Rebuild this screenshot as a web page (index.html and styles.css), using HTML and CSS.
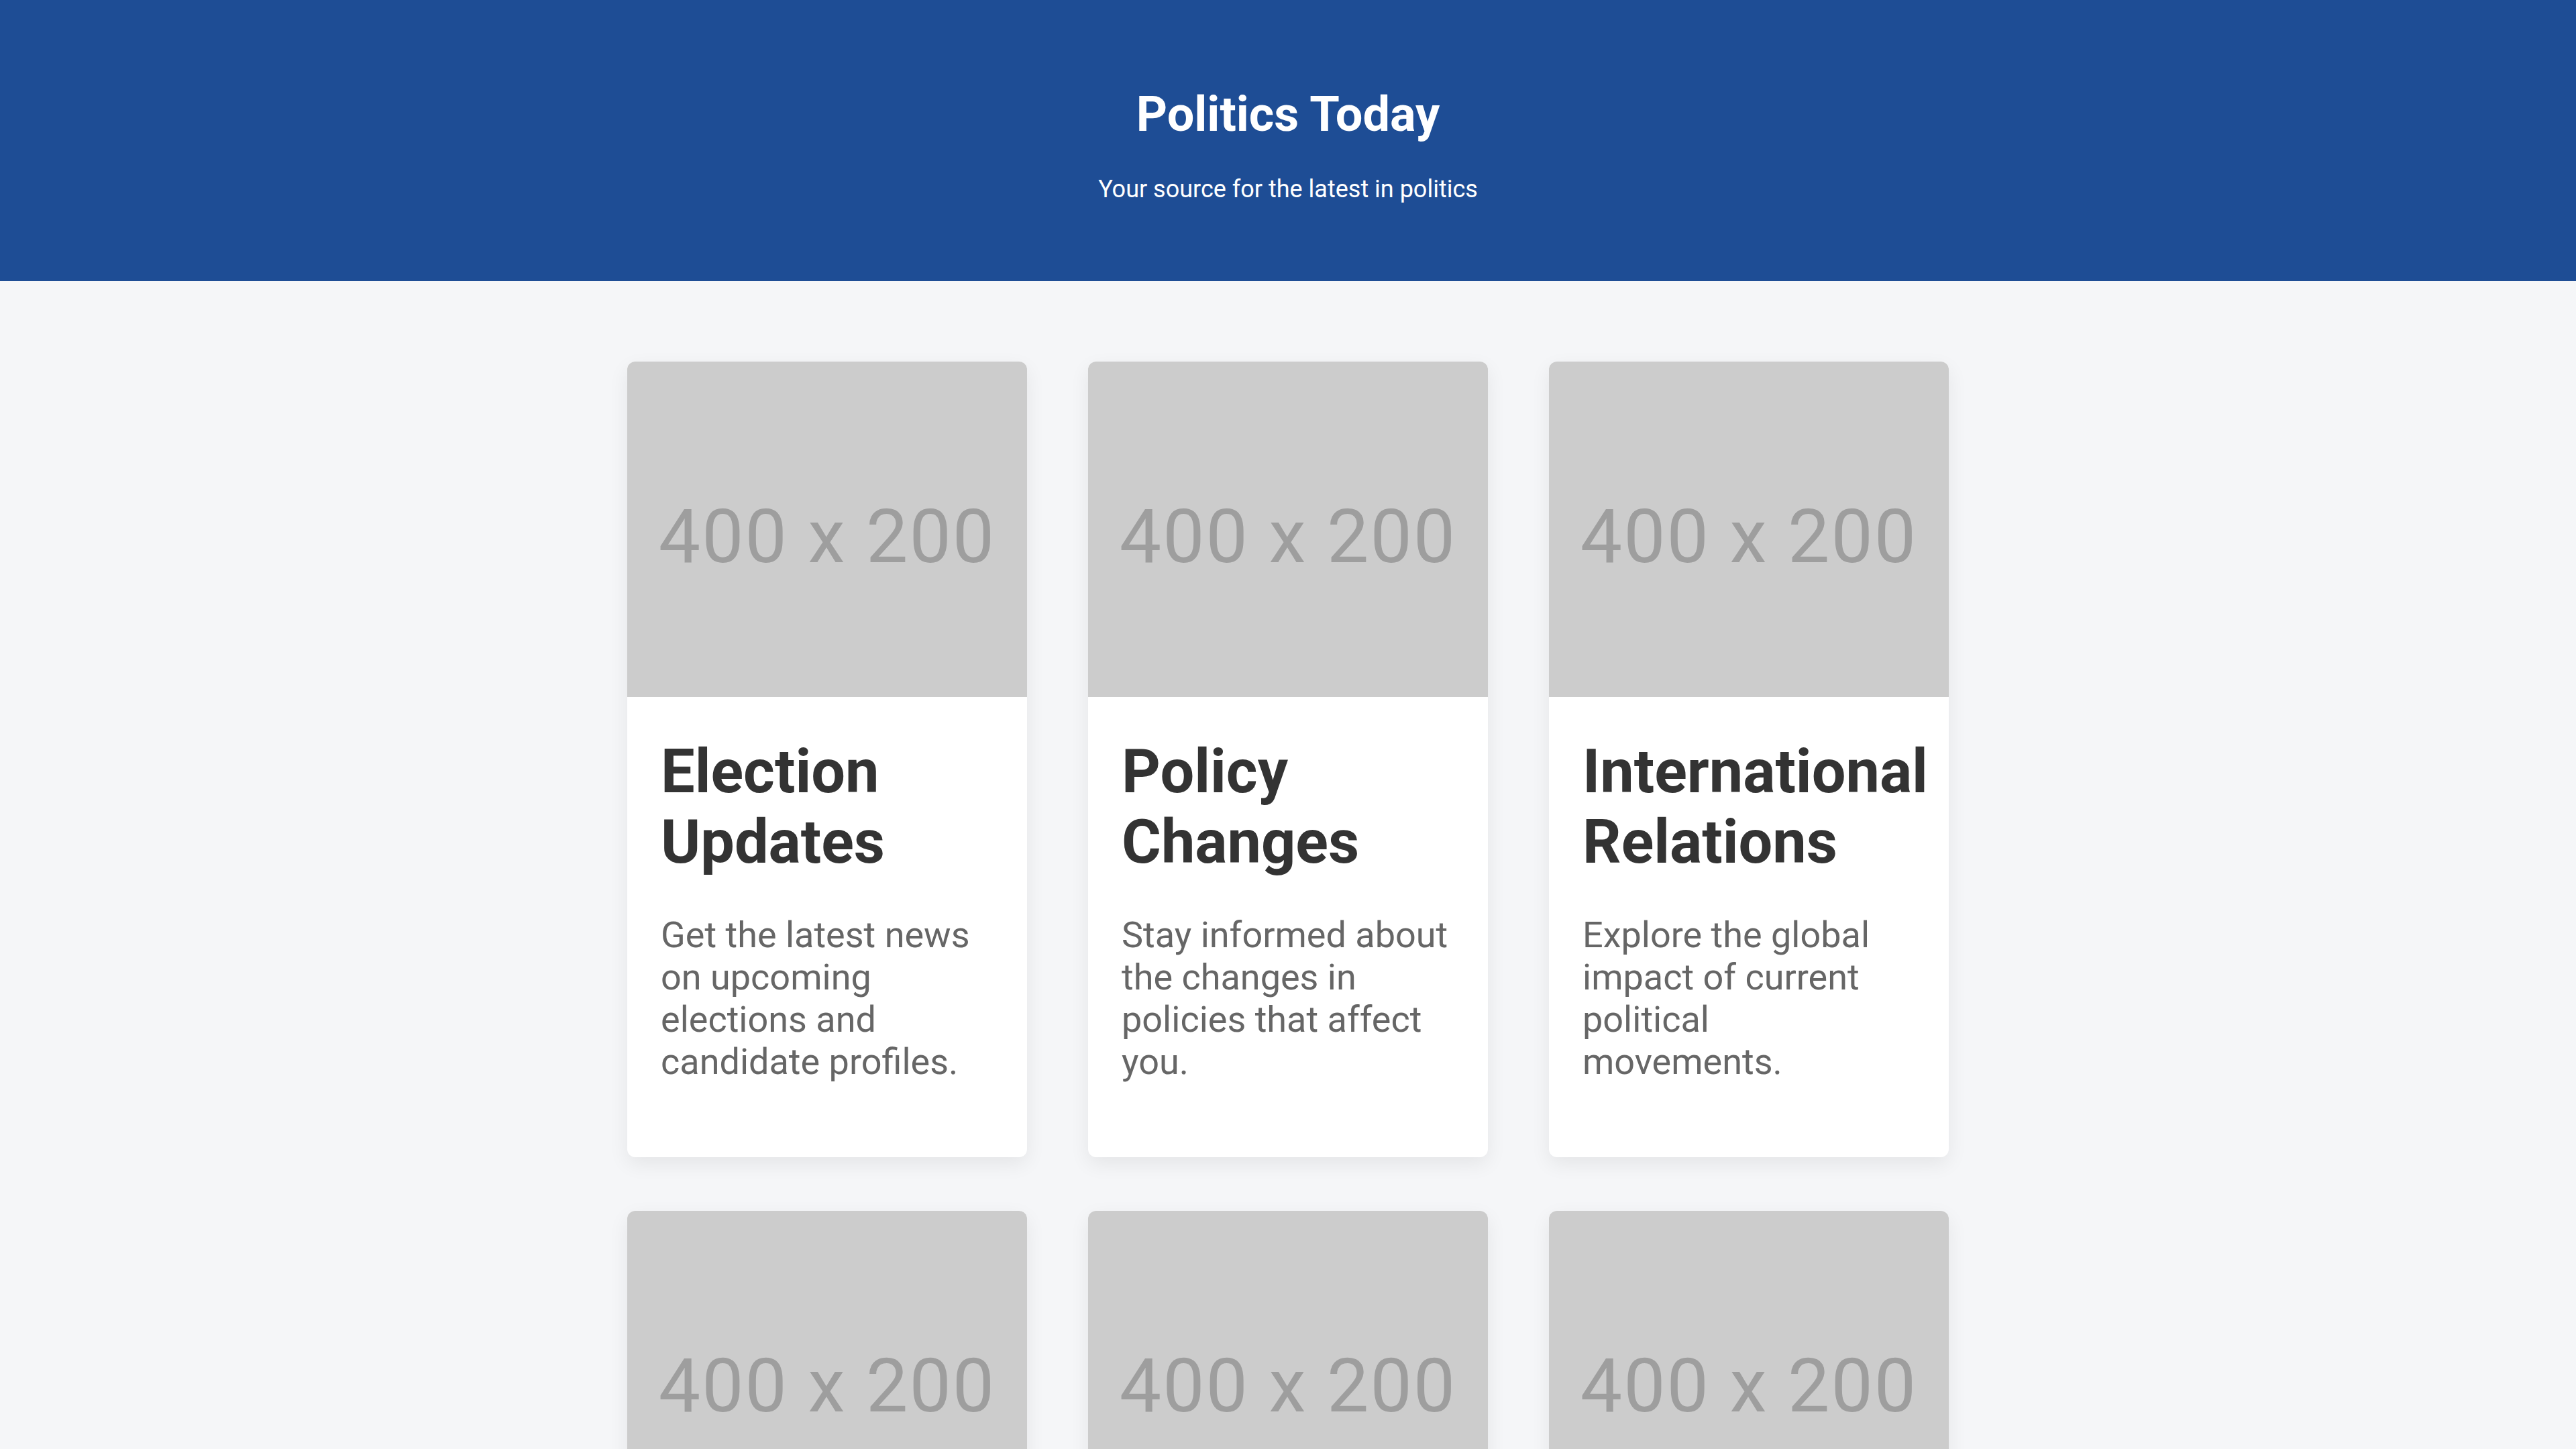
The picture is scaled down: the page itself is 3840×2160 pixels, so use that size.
FILE: index.html
```html
<!DOCTYPE html>
<html lang="en">
<head>
<meta charset="utf-8">
<title>Politics Today</title>
<link rel="stylesheet" href="styles.css">
</head>
<body>
<header class="site-header">
  <h1 class="site-title">Politics Today</h1>
  <p class="site-tagline">Your source for the latest in politics</p>
</header>
<main class="content">
  <div class="card-grid">
    <article class="card">
      <div class="card-image"><span>400 x 200</span></div>
      <div class="card-body">
        <h2 class="card-title">Election Updates</h2>
        <p class="card-text">Get the latest news on upcoming elections and candidate profiles.</p>
      </div>
    </article>
    <article class="card">
      <div class="card-image"><span>400 x 200</span></div>
      <div class="card-body">
        <h2 class="card-title">Policy Changes</h2>
        <p class="card-text">Stay informed about the changes in policies that affect you.</p>
      </div>
    </article>
    <article class="card">
      <div class="card-image"><span>400 x 200</span></div>
      <div class="card-body">
        <h2 class="card-title">International Relations</h2>
        <p class="card-text">Explore the global impact of current political movements.</p>
      </div>
    </article>
    <article class="card">
      <div class="card-image"><span>400 x 200</span></div>
      <div class="card-body">
        <h2 class="card-title">Opinion Pieces</h2>
        <p class="card-text">Read expert opinions and analysis on political issues.</p>
      </div>
    </article>
    <article class="card">
      <div class="card-image"><span>400 x 200</span></div>
      <div class="card-body">
        <h2 class="card-title">Local Politics</h2>
        <p class="card-text">Discover what is happening in your local government.</p>
      </div>
    </article>
    <article class="card">
      <div class="card-image"><span>400 x 200</span></div>
      <div class="card-body">
        <h2 class="card-title">Political Analysis</h2>
        <p class="card-text">In-depth analysis of political trends and events.</p>
      </div>
    </article>
  </div>
</main>
</body>
</html>
```

FILE: styles.css
```css
* {
  box-sizing: border-box;
}

html, body {
  margin: 0;
  padding: 0;
}

body {
  background: #f5f6f8;
  font-family: Roboto, "Liberation Sans", Arial, sans-serif;
  color: #333333;
}

.site-header {
  background: #1e4d95;
  color: #ffffff;
  text-align: center;
  height: 419px;
  padding-top: 128px;
}

.site-title {
  margin: 0;
  font-size: 72px;
  font-weight: 700;
  line-height: normal;
}

.site-tagline {
  margin: 48px 0 0;
  font-size: 36px;
  font-weight: 400;
  line-height: normal;
}

.content {
  padding-top: 120px;
  padding-bottom: 120px;
}

.card-grid {
  display: grid;
  grid-template-columns: repeat(3, 596px);
  column-gap: 91px;
  row-gap: 80px;
  justify-content: center;
}

.card {
  background: #ffffff;
  border-radius: 12px;
  overflow: hidden;
  box-shadow: 0 10px 30px rgba(0, 0, 0, 0.07);
}

.card-image {
  height: 500px;
  background: #cccccc;
  display: flex;
  align-items: center;
  justify-content: center;
  padding-top: 22px;
}

.card-image span {
  font-family: Roboto, "Liberation Sans", Arial, sans-serif;
  font-size: 111px;
  letter-spacing: 2px;
  color: #9e9e9e;
  line-height: normal;
}

.card-body {
  padding: 59px 50px 0;
}

.card-title {
  margin: 0 0 54px;
  font-size: 90px;
  font-weight: 700;
  line-height: normal;
  color: #333333;
}

.card-text {
  margin: 0 0 111px;
  font-size: 54px;
  line-height: normal;
  color: #666666;
}
```
